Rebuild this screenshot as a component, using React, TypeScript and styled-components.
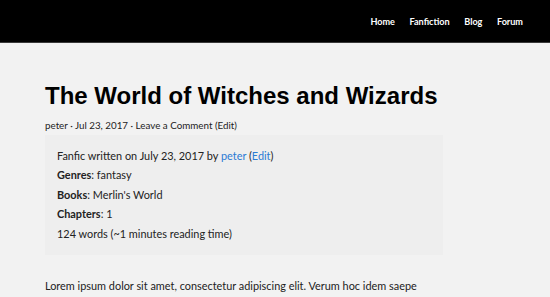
import React from "react";
import styled, { createGlobalStyle } from "styled-components";

const Global = createGlobalStyle`
  html, body { margin: 0; padding: 0; background: #f2f2f2; }
  body { font-family: Lato, "Open Sans", sans-serif; color: #222; }
`;

const Header = styled.header`
  height: 42px;
  background: #000;
  border-bottom: 1px solid #3a3a3a;
  display: flex;
  align-items: center;
  justify-content: flex-end;
  padding-right: 27px;
`;

const Nav = styled.nav`
  display: flex;
  gap: 14.5px;
`;

const NavLink = styled.a`
  color: #fff;
  font-size: 9.1px;
  font-weight: 700;
  text-decoration: none;
`;

const Main = styled.main`
  padding: 38px 0 0 45px;
`;

const Title = styled.h1`
  margin: 0;
  font-family: "Liberation Sans", Arial, sans-serif;
  font-weight: 700;
  font-size: 24px;
  color: #000;
  line-height: 30px;
`;

const Meta = styled.div`
  margin-top: 8px;
  font-size: 9.8px;
  line-height: 13px;
  color: #222;
`;

const Box = styled.div`
  margin-top: 3px;
  width: 398px;
  box-sizing: border-box;
  background: #eeeeee;
  padding: 11px 12px 12px 12px;
  font-size: 10.9px;
  line-height: 19.4px;
`;

const Line = styled.div``;

const Label = styled.b`
  font-weight: 700;
`;

const Link = styled.a`
  color: #2b7bd4;
  text-decoration: none;
`;

const Para = styled.p`
  margin: 21px 0 0;
  font-size: 10.9px;
  line-height: 19px;
`;

export default function App() {
  return (
    <>
      <Global />
      <Header>
        <Nav>
          <NavLink>Home</NavLink>
          <NavLink>Fanfiction</NavLink>
          <NavLink>Blog</NavLink>
          <NavLink>Forum</NavLink>
        </Nav>
      </Header>
      <Main>
        <Title>The World of Witches and Wizards</Title>
        <Meta>peter · Jul 23, 2017 · Leave a Comment (Edit)</Meta>
        <Box>
          <Line>
            Fanfic written on July 23, 2017 by <Link>peter</Link> (<Link>Edit</Link>)
          </Line>
          <Line>
            <Label>Genres</Label>: fantasy
          </Line>
          <Line>
            <Label>Books</Label>: Merlin's World
          </Line>
          <Line>
            <Label>Chapters</Label>: 1
          </Line>
          <Line>124 words (~1 minutes reading time)</Line>
        </Box>
        <Para>Lorem ipsum dolor sit amet, consectetur adipiscing elit. Verum hoc idem saepe</Para>
      </Main>
    </>
  );
}
